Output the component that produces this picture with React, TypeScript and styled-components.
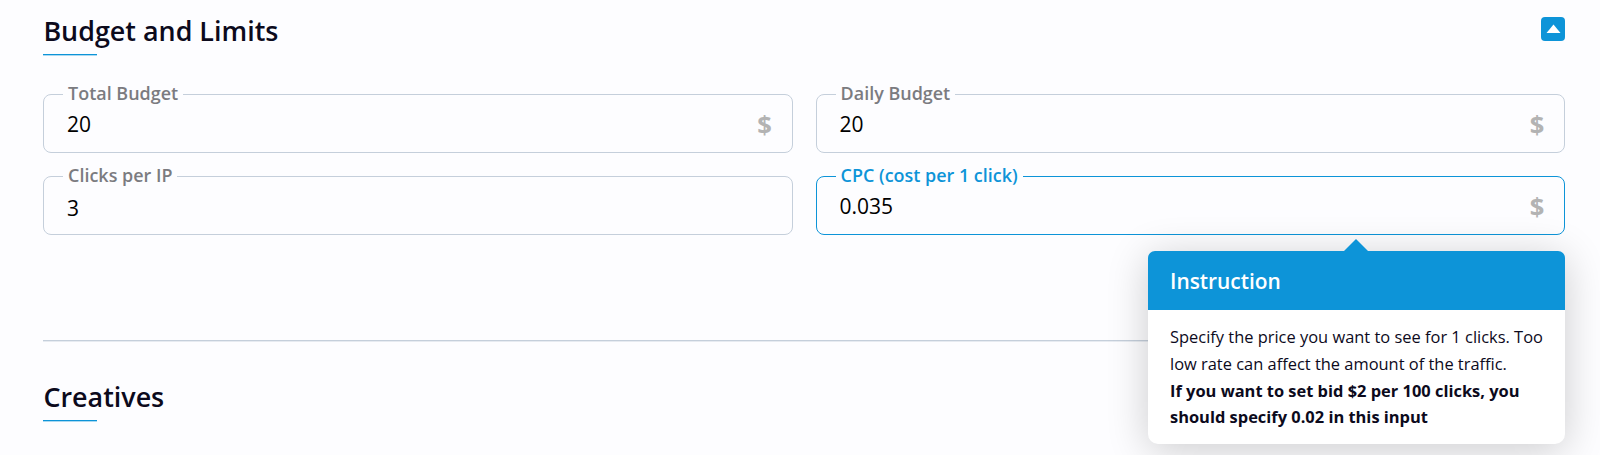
import React from "react";
import styled, { createGlobalStyle } from "styled-components";

const Global = createGlobalStyle`
  * { box-sizing: border-box; }
  body { margin: 0; background: #fdfdff; font-family: "Open Sans", sans-serif; color: #0c0a1c; overflow: hidden; }
`;
const Page = styled.main`height: 455px; padding: 0 34.6px 0 43.4px; overflow: hidden;`;
const SectionHeader = styled.header<{ $spaced?: boolean }>`
  display: flex; justify-content: space-between; align-items: flex-start; padding-top: ${p => (p.$spaced ? "36px" : "11px")};
`;
const Title = styled.h2`
  margin: 0; font-size: 26.9px; line-height: 40px; font-weight: 600; height: 44px;
  &::after { content: ""; display: block; width: 54px; height: 1px; margin-top: 2.6px; background: #0d94d8; box-shadow: 0 1px rgba(13,148,216,.35); }
`;
const Toggle = styled.button`
  width: 24px; height: 24px; margin-top: 6px; padding: 0 0 1px; border: 0; border-radius: 4px; background: #0d94d8;
  display: flex; align-items: center; justify-content: center;
`;
const Fields = styled.div`display: grid; grid-template-columns: 1fr 1fr; gap: 10px 23px; margin-top: 26px;`;
const Field = styled.fieldset<{ $active?: boolean }>`
  margin: 0; min-width: 0; height: 72px; padding: 0 20px 0 22.5px; border-radius: 8px;
  border: 1px solid ${p => (p.$active ? "#0d94d8" : "#c5cfdb")};
  color: ${p => (p.$active ? "#0d94d8" : "#7b7b80")};
`;
const Legend = styled.legend`margin-left: -3.8px; padding: 0 5px 2px; font-size: 17.95px; line-height: 24px; font-weight: 600;`;
const Row = styled.div<{ $plain?: boolean }>`
  display: flex; justify-content: space-between; align-items: center; height: ${p => (p.$plain ? "38px" : "34px")};
`;
const Value = styled.span`font-size: 21px; color: #000;`;
const Unit = styled.span`font-size: 25.5px; font-weight: 700; color: #b3b3b3;`;
const Divider = styled.hr`margin: 105px 0 0; border: 0; height: 1px; background: #c5cfdb; box-shadow: 0 1px rgba(197,207,219,.4);`;
const Tooltip = styled.aside`
  position: absolute; top: 251px; left: 1148px; width: 417.4px; height: 193px; border-radius: 7px 7px 10px 10px; background: #fff;
  box-shadow: 0 6px 42px rgba(0,0,0,.2);
`;
const Arrow = styled.i`position: absolute; left: 196px; top: -12px; border: 12px solid transparent; border-top: 0; border-bottom-color: #0d94d8;`;
const TipTitle = styled.h3`
  margin: 0; height: 59px; padding: 0 22px; border-radius: 7px 7px 0 0; background: #0d94d8; color: #fff;
  font-size: 20.9px; line-height: 60px; font-weight: 600;
`;
const TipText = styled.p`margin: 0; padding: 14px 22px; font-size: 16.43px; line-height: 26.8px; white-space: nowrap;`;

const InputField = ({ label, value, unit, active }: { label: string; value: string; unit?: boolean; active?: boolean }) => (
  <Field $active={active}><Legend>{label}</Legend><Row $plain={!unit}><Value>{value}</Value>{unit && <Unit>$</Unit>}</Row></Field>
);

export default function App() {
  return (
    <Page>
      <Global />
      <SectionHeader><Title>Budget and Limits</Title>
        <Toggle aria-label="Collapse"><svg width="15" height="9" viewBox="0 0 15 9"><path d="M0.5 9L7.5 0.5L14.5 9Z" fill="#fff" /></svg></Toggle>
      </SectionHeader>
      <Fields>
        <InputField label="Total Budget" value="20" unit />
        <InputField label="Daily Budget" value="20" unit />
        <InputField label="Clicks per IP" value="3" />
        <InputField label="CPC (cost per 1 click)" value="0.035" unit active />
      </Fields>
      <Divider />
      <SectionHeader $spaced><Title>Creatives</Title></SectionHeader>
      <Tooltip role="tooltip"><Arrow /><TipTitle>Instruction</TipTitle>
        <TipText>Specify the price you want to see for 1 clicks. Too<br />low rate can affect the amount of the traffic.<br /><b>If you want to set bid $2 per 100 clicks, you<br />should specify 0.02 in this input</b></TipText>
      </Tooltip>
    </Page>
  );
}
